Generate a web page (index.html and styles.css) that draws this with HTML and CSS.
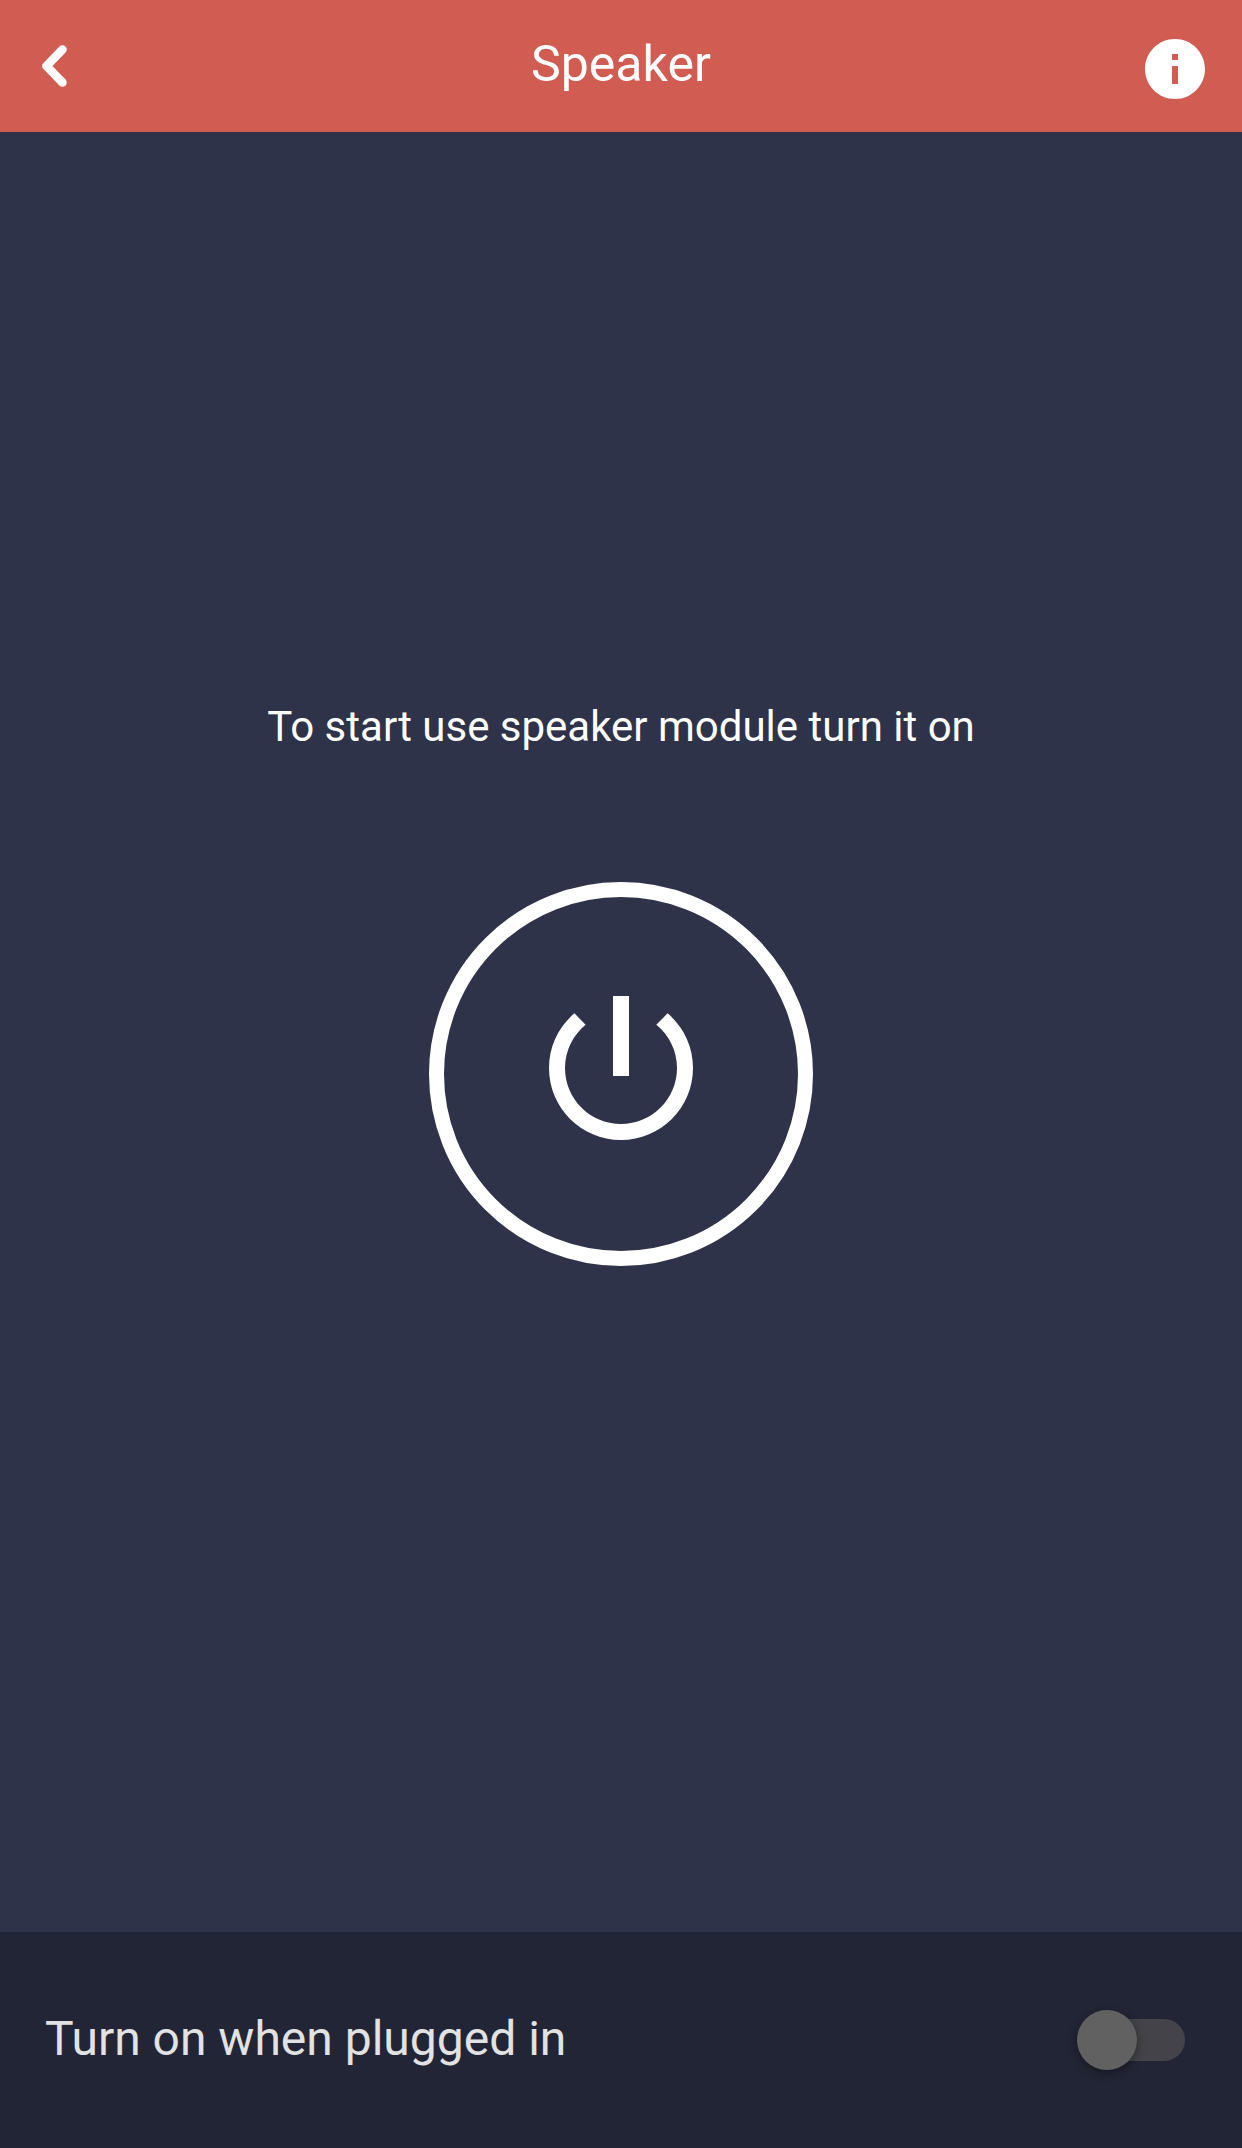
FILE: index.html
```html
<!DOCTYPE html>
<html lang="en">
<head>
<meta charset="utf-8">
<meta name="viewport" content="width=device-width, initial-scale=1">
<title>Speaker</title>
<link rel="stylesheet" href="styles.css">
</head>
<body class="screen">
  <header class="topbar">
    <button class="icon-button back" type="button" aria-label="Back">
      <svg class="icon" viewBox="0 0 72 72" fill="none" stroke="currentColor" stroke-width="8.5" stroke-linecap="round" stroke-linejoin="round"><path d="M44.5 19.500 28.500 36l16 16.500"/></svg>
    </button>
    <h1 class="title">Speaker</h1>
    <button class="icon-button info" type="button" aria-label="Information">
      <svg class="icon" viewBox="0 0 24 24" fill="currentColor"><path d="M12 2C6.480 2 2 6.480 2 12s4.480 10 10 10 10-4.480 10-10S17.520 2 12 2zm1 15h-2v-6h2v6zm0-8h-2V7h2v2z"/></svg>
    </button>
  </header>
  <main class="content">
    <p class="message">To start use speaker module turn it on</p>
    <button class="power" type="button" aria-label="Turn on speaker">
      <svg class="power-icon" viewBox="0 0 24 24" fill="currentColor"><path d="M13 3h-2v10h2V3zm4.830 2.170l-1.420 1.420C17.990 7.860 19 9.810 19 12c0 3.870-3.130 7-7 7s-7-3.130-7-7c0-2.190 1.010-4.140 2.580-5.420L6.170 5.170C4.230 6.820 3 9.260 3 12c0 4.970 4.030 9 9 9s9-4.030 9-9c0-2.740-1.230-5.180-3.170-6.830z"/></svg>
    </button>
  </main>
  <footer class="setting">
    <label class="setting-label" for="auto-on">Turn on when plugged in</label>
    <input class="switch" id="auto-on" type="checkbox" role="switch">
  </footer>
</body>
</html>
```
FILE: styles.css
```css
* {
  box-sizing: border-box;
}

.screen {
  display: flex;
  flex-direction: column;
  min-height: 100vh;
  margin: 0;
  background: #2f3349;
  color: #fff;
  font-family: Roboto, "Liberation Sans", sans-serif;
}

.topbar {
  display: grid;
  grid-template-columns: 1fr auto 1fr;
  align-items: center;
  height: 132px;
  background: #d05c52;
}

.icon-button {
  width: 72px;
  height: 72px;
  padding: 0;
  border: 0;
  background: none;
  color: inherit;
  cursor: pointer;
}

.icon {
  display: block;
  width: 100%;
  height: 100%;
}

.back {
  margin-left: 18px;
}

.info {
  justify-self: end;
  margin-top: 6px;
  margin-right: 31px;
}

.title {
  margin: 0;
  padding-bottom: 4px;
  font-size: 50px;
  line-height: 60px;
  font-weight: 400;
}

.content {
  flex: 1;
  display: flex;
  flex-direction: column;
  align-items: center;
  justify-content: center;
  gap: 130px;
  padding-bottom: 96px;
}

.message {
  margin: 0;
  font-size: 42px;
  line-height: 50px;
  text-align: center;
}

.power {
  display: flex;
  align-items: center;
  justify-content: center;
  width: 384px;
  height: 384px;
  padding: 0 0 12px;
  border: 15px solid #fff;
  border-radius: 50%;
  background: none;
  color: inherit;
  cursor: pointer;
}

.power-icon {
  width: 192px;
  height: 192px;
}

.setting {
  display: flex;
  align-items: center;
  justify-content: space-between;
  height: 216px;
  padding: 0 57px 0 45px;
  background: #222535;
}

.setting-label {
  padding-bottom: 2px;
  color: #e2e2e3;
  font-size: 48px;
  line-height: 60px;
}

.switch {
  appearance: none;
  display: flex;
  align-items: center;
  width: 108px;
  height: 60px;
  margin: 0;
  cursor: pointer;
}

.switch::before {
  content: "";
  width: 102px;
  height: 42px;
  margin-left: 6px;
  border-radius: 21px;
  background: #444349;
}

.switch::after {
  content: "";
  width: 60px;
  height: 60px;
  flex: none;
  margin-left: -108px;
  border-radius: 50%;
  background: #616161;
  box-shadow: 0 3px 10px rgba(0, 0, 0, 0.4);
}

.switch:checked::after {
  margin-left: -60px;
}
```
